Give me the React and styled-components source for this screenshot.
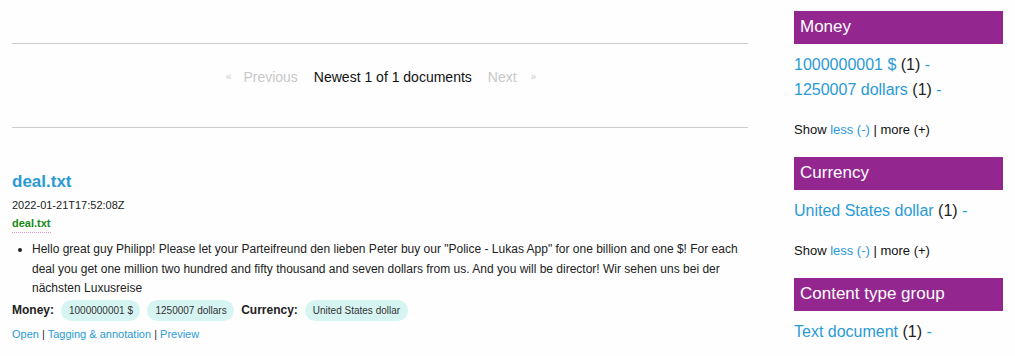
import React from 'react';
import styled, { createGlobalStyle } from 'styled-components';

const GlobalStyle = createGlobalStyle`
    body {
        margin: 0;
        background: #fefefe;
        font-family: "Liberation Sans", Arial, sans-serif;
        color: #222;
    }
    a {
        color: #2a9ad6;
        text-decoration: none;
    }
`;

const Page = styled.div`
    display: flex;
    gap: 46px;
    padding: 0 12px;
    width: 1015px;
    box-sizing: border-box;
`;

const Main = styled.main`
    width: 736px;
    flex-shrink: 0;
`;

const Rule = styled.hr`
    border: none;
    border-top: 1px solid #ccc;
    margin: ${p => p.$top || 0}px 0 0;
`;

const Pager = styled.nav`
    display: flex;
    justify-content: center;
    align-items: center;
    gap: 16px;
    font-size: 14px;
    line-height: 20px;
    padding: 23px 0 40px 2px;
`;

const PagerArrow = styled.span`
    color: #ccc;
    font-size: 10px;
    margin: ${p => (p.$left ? '0 -4px 0 0' : '0 0 0 -2px')};
`;

const PagerLink = styled.span`
    color: ${p => (p.$muted ? '#c8c8c8' : '#111')};
`;

const Result = styled.article`
    padding-top: 44px;
`;

const Title = styled.a`
    display: block;
    font-size: 17px;
    font-weight: 700;
    line-height: 20px;
`;

const Stamp = styled.div`
    font-size: 11px;
    line-height: 15px;
    margin-top: 6px;
    color: #222;
`;

const FileName = styled.span`
    display: inline-block;
    font-size: 11px;
    font-weight: 700;
    color: #168a16;
    line-height: 14px;
    margin-top: 3px;
    padding-bottom: 2px;
    border-bottom: 1px dotted #e49bc9;
`;

const Snippets = styled.ul`
    margin: 7px 0 0;
    padding-left: 20px;
    font-size: 12px;
    line-height: 19.5px;
    color: #222;
`;

const Facts = styled.div`
    display: flex;
    align-items: center;
    gap: 7px;
    margin-top: 1px;
    font-size: 12px;
`;

const FactLabel = styled.b`
    font-weight: 700;
    color: #222;
`;

const Chip = styled.span`
    display: inline-flex;
    align-items: center;
    height: 21px;
    padding: 0 7.5px 0 8px;
    border-radius: 11px;
    background: #d6f5f2;
    font-size: 10px;
    color: #333;
`;

const Actions = styled.div`
    margin-top: 5px;
    font-size: 11px;
    line-height: 16px;
    color: #333;
`;

const Sidebar = styled.aside`
    width: 209px;
    flex-shrink: 0;
    padding-top: 11px;
`;

const Facet = styled.section`
    margin-bottom: 19px;
`;

const FacetHead = styled.h3`
    margin: 0 0 8px;
    height: 33px;
    line-height: 31px;
    padding: 0 6px;
    background: #93278f;
    color: #fff;
    font-size: 17px;
    font-weight: 400;
`;

const FacetItem = styled.div`
    font-size: 16px;
    line-height: 25px;
    color: #222;
`;

const ShowMore = styled.div`
    margin-top: 19px;
    font-size: 13px;
    line-height: 17px;
    color: #111;
`;

const facets = [
    {
        name: 'Money',
        items: ['1000000001 $', '1250007 dollars'],
        toggle: true,
    },
    {
        name: 'Currency',
        items: ['United States dollar'],
        toggle: true,
    },
    {
        name: 'Content type group',
        items: ['Text document'],
    },
];

function App() {
    return (
        <>
            <GlobalStyle />
            <Page>
                <Main>
                    <Rule $top={43} />
                    <Pager>
                        <PagerArrow $left>«</PagerArrow>
                        <PagerLink $muted>Previous</PagerLink>
                        <PagerLink>Newest 1 of 1 documents</PagerLink>
                        <PagerLink $muted>Next</PagerLink>
                        <PagerArrow>»</PagerArrow>
                    </Pager>
                    <Rule />
                    <Result>
                        <Title href="#">deal.txt</Title>
                        <Stamp>2022-01-21T17:52:08Z</Stamp>
                        <FileName>deal.txt</FileName>
                        <Snippets>
                            <li>
                                Hello great guy Philipp! Please let your Parteifreund den lieben Peter buy our "Police - Lukas App" for one billion and one $! For each deal you get one million two hundred and fifty thousand and seven dollars from us. And you will be director! Wir sehen uns bei der nächsten Luxusreise
                            </li>
                        </Snippets>
                        <Facts>
                            <FactLabel>Money:</FactLabel>
                            <Chip>1000000001 $</Chip>
                            <Chip>1250007 dollars</Chip>
                            <FactLabel>Currency:</FactLabel>
                            <Chip>United States dollar</Chip>
                        </Facts>
                        <Actions>
                            <a href="#">Open</a> | <a href="#">Tagging &amp; annotation</a> | <a href="#">Preview</a>
                        </Actions>
                    </Result>
                </Main>
                <Sidebar>
                    {facets.map(f => (
                        <Facet key={f.name}>
                            <FacetHead>{f.name}</FacetHead>
                            {f.items.map(item => (
                                <FacetItem key={item}>
                                    <a href="#">{item}</a> (1) <a href="#">-</a>
                                </FacetItem>
                            ))}
                            {f.toggle && (
                                <ShowMore>
                                    Show <a href="#">less (-)</a> | more (+)
                                </ShowMore>
                            )}
                        </Facet>
                    ))}
                </Sidebar>
            </Page>
        </>
    );
}

export default App;
